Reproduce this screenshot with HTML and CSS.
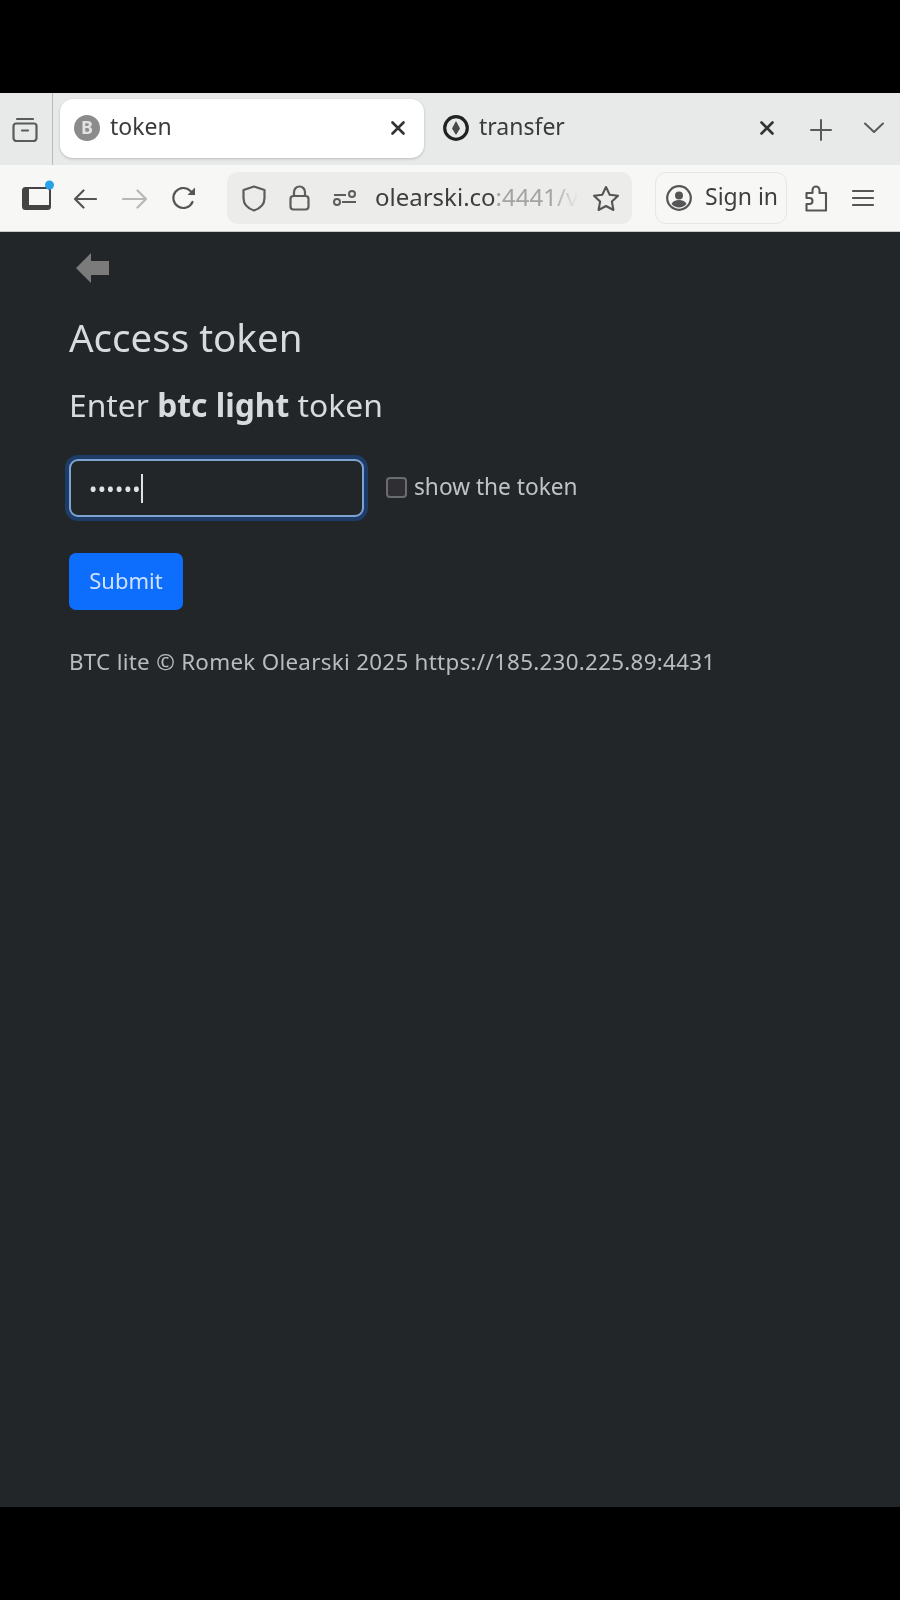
FILE: index.html
```html
<!DOCTYPE html>
<html lang="en">
<head>
<meta charset="utf-8">
<title>token</title>
<link rel="stylesheet" href="styles.css">
</head>
<body>
<div class="letterbox-top"></div>
<header class="chrome">
  <div class="tabbar">
    <span class="tool-archive">
      <svg class="ico" width="26" height="27" viewBox="0 0 26 27"><path d="M5 3h16M1.500 10a2.500 2.500 0 0 1 2.500-2.500h18a2.500 2.500 0 0 1 2.500 2.500v12a3 3 0 0 1-3 3h-17a3 3 0 0 1-3-3zM10 14.500h6" fill="none" stroke="#5b5b5b" stroke-width="2.200" stroke-linecap="round"/></svg>
    </span>
    <span class="tab-sep"></span>
    <div class="tab tab-active">
      <svg class="fav" width="26" height="26" viewBox="0 0 26 26"><circle cx="13" cy="13" r="13" fill="#8b8b8b"/><text x="13" y="19" text-anchor="middle" class="fav-b">B</text></svg>
      <span class="tab-title">token</span>
      <svg class="close" width="14" height="14" viewBox="0 0 14 14"><path d="M1.500 1.500l11 11M12.500 1.500l-11 11" stroke="#333" stroke-width="2.600" stroke-linecap="round"/></svg>
    </div>
    <div class="tab tab-idle">
      <svg class="fav" width="26" height="26" viewBox="0 0 26 26"><circle cx="13" cy="13" r="11.300" fill="none" stroke="#222" stroke-width="3.200"/><path d="M13 6l4 7.500L13 20l-4-6.500z" fill="#4a4a4a"/></svg>
      <span class="tab-title">transfer</span>
      <svg class="close" width="14" height="14" viewBox="0 0 14 14"><path d="M1.500 1.500l11 11M12.500 1.500l-11 11" stroke="#333" stroke-width="2.600" stroke-linecap="round"/></svg>
    </div>
    <svg class="tab-plus" width="22" height="22" viewBox="0 0 22 22"><path d="M11 1v20M1 11h20" stroke="#5a5a5a" stroke-width="2" stroke-linecap="round"/></svg>
    <svg class="tab-chev" width="20" height="12" viewBox="0 0 20 12"><path d="M1 1.500l9 8.500 9-8.500" fill="none" stroke="#5a5a5a" stroke-width="2" stroke-linecap="round" stroke-linejoin="round"/></svg>
  </div>
  <nav class="navbar">
    <span class="sidebar-btn">
      <svg width="34" height="30" viewBox="0 0 34 30"><rect x="1" y="8" width="27" height="21" rx="2.500" fill="none" stroke="#444" stroke-width="2"/><rect x="1" y="9" width="6" height="19" fill="#444"/><rect x="6" y="25" width="21" height="3.500" fill="#444"/><circle cx="27.500" cy="5" r="4.500" fill="#2aa2e8"/></svg>
    </span>
    <svg class="nav-back" width="24" height="20" viewBox="0 0 24 20"><path d="M23 10H2M10.500 1.500L2 10l8.500 8.500" fill="none" stroke="#555" stroke-width="2.200" stroke-linecap="round" stroke-linejoin="round"/></svg>
    <svg class="nav-fwd" width="26" height="20" viewBox="0 0 26 20"><path d="M1 10h23M15.500 1.500L24 10l-8.500 8.500" fill="none" stroke="#b6b7b6" stroke-width="2.200" stroke-linecap="round" stroke-linejoin="round"/></svg>
    <svg class="nav-reload" width="25" height="25" viewBox="0 0 25 25"><path d="M21.500 16a10 10 0 1 1-2-11L23 8" fill="none" stroke="#555" stroke-width="2.200" stroke-linecap="round"/><path d="M24 1.500V9h-7.500z" fill="#555"/></svg>
    <div class="urlbar">
      <svg class="url-shield" width="24" height="27" viewBox="0 0 24 27"><path d="M12 1.500l10.500 3.500v8c0 6-4.500 10.500-10.500 12.500C6 23.500 1.500 19 1.500 13V5z" fill="none" stroke="#5c5c5c" stroke-width="2.200" stroke-linejoin="round"/></svg>
      <svg class="url-lock" width="21" height="26" viewBox="0 0 21 26"><rect x="1.500" y="11" width="18" height="13.500" rx="3" fill="none" stroke="#5c5c5c" stroke-width="2.200"/><path d="M5 11V7a5.500 5.500 0 0 1 11 0v4" fill="none" stroke="#5c5c5c" stroke-width="2.200"/></svg>
      <svg class="url-perm" width="24" height="16" viewBox="0 0 24 16"><path d="M1 5h12M9 12h14" stroke="#5c5c5c" stroke-width="2"/><circle cx="19" cy="4" r="3" fill="none" stroke="#5c5c5c" stroke-width="2"/><circle cx="4" cy="12" r="3" fill="none" stroke="#5c5c5c" stroke-width="2"/></svg>
      <span class="url-text"><span class="url-host">olearski.co</span><span class="url-rest">:4441/v</span></span>
      <svg class="url-star" width="28" height="27" viewBox="0 0 28 27"><path d="M14 2l3.700 7.700 8.300 1.100-6.100 5.800 1.500 8.400L14 21l-7.400 4 1.500-8.400L2 10.800l8.300-1.100z" fill="none" stroke="#555" stroke-width="2.100" stroke-linejoin="round"/></svg>
    </div>
    <div class="signin">
      <svg width="26" height="26" viewBox="0 0 26 26"><circle cx="13" cy="13" r="11.800" fill="none" stroke="#555" stroke-width="2.200"/><circle cx="13" cy="10.500" r="4" fill="#555"/><path d="M5.500 19c1.500-3 4-4 7.500-4s6 1 7.500 4c-2 2-4.500 3.500-7.500 3.500S7.500 21 5.500 19z" fill="#555"/></svg>
      <span>Sign in</span>
    </div>
    <svg class="nav-ext" width="23" height="27" viewBox="0 0 23 27"><path d="M1.500 25.500V19h3a3 3 0 0 0 0-6h-3V8h6V5a3.500 3.500 0 0 1 7 0v3h6.500v17.500z" fill="none" stroke="#555" stroke-width="2.100" stroke-linejoin="round"/></svg>
    <svg class="nav-menu" width="22" height="18" viewBox="0 0 22 18"><path d="M1 2h20M1 9h20M1 16h20" stroke="#555" stroke-width="2.200" stroke-linecap="round"/></svg>
  </nav>
</header>
<main class="page">
  <a class="back" href="#"><svg width="34" height="30" viewBox="0 0 34 30"><path d="M15 0L0 15l15 15v-8h18V8H15z" fill="#7b7b7b"/></svg></a>
  <h1 class="title">Access token</h1>
  <h2 class="prompt">Enter <b>btc light</b> token</h2>
  <form class="token-form">
    <div class="token-row">
      <div class="token-input"><span class="dots">••••••</span><span class="caret"></span></div>
      <label class="show"><span class="check"></span><span>show the token</span></label>
    </div>
    <button type="button" class="submit">Submit</button>
  </form>
  <p class="foot">BTC lite © Romek Olearski 2025 https://185.230.225.89:4431</p>
</main>
<div class="letterbox-bottom"></div>
</body>
</html>
```

FILE: styles.css
```css
* { box-sizing: border-box; }
html, body { margin: 0; height: 100%; }
body {
  width: 900px;
  height: 1600px;
  overflow: hidden;
  background: #000;
  display: flex;
  flex-direction: column;
  font-family: "Noto Sans", "Open Sans", sans-serif;
}
svg { display: block; flex: none; }
.letterbox-top { height: 93px; background: #000; flex: none; }
.letterbox-bottom { height: 93px; background: #000; flex: none; }

.chrome { flex: none; filter: blur(.4px); }
.tabbar {
  height: 72px;
  background: #e8e9e9;
  display: flex;
  align-items: center;
  position: relative;
}
.tool-archive { width: 52px; padding-left: 12px; }
.tab-sep { width: 1px; height: 72px; background: #b9baba; }
.tab {
  height: 59px;
  display: flex;
  align-items: center;
  padding-left: 14px;
  margin-bottom: 2px;
  border-radius: 13px;
}
.tab-active {
  width: 364px;
  margin-left: 7px;
  background: #fff;
  box-shadow: 0 1px 3px rgba(0,0,0,.2);
}
.tab-idle { width: 364px; padding-left: 19px; }
.tab-title {
  font-size: 23px;
  color: #3b3b3b;
  margin-left: 10px;
  flex: 1;
  padding-bottom: 5px;
}
.fav-b { font-size: 18px; font-weight: 700; fill: #e2e2e2; font-family: "Noto Sans", sans-serif; }
.close { margin-right: 19px; }
.tab-idle .close { margin-right: 14px; }
.tab-plus { margin-left: 22px; margin-top: 2px; }
.tab-chev { margin-left: 32px; margin-top: -2px; }

.navbar {
  height: 67px;
  background: #f7f8f6;
  border-bottom: 1px solid #c9cac9;
  display: flex;
  align-items: center;
}
.sidebar-btn { margin-left: 22px; margin-top: -6px; }
.nav-back { margin-left: 17px; margin-top: 1px; }
.nav-fwd { margin-left: 25px; margin-top: 1px; }
.nav-reload { margin-left: 23px; }
.urlbar {
  margin-left: 31px;
  width: 405px;
  height: 52px;
  background: #ecedeb;
  border-radius: 11px;
  display: flex;
  align-items: center;
}
.url-shield { margin-left: 15px; }
.url-lock { margin-left: 23px; }
.url-perm { margin-left: 23px; }
.url-text {
  margin-left: 18px;
  width: 206px;
  white-space: nowrap;
  font-size: 24px;
  padding-bottom: 3px;
  -webkit-mask-image: linear-gradient(to right, #000 175px, transparent 204px);
  mask-image: linear-gradient(to right, #000 175px, transparent 204px);
}
.url-host { color: #3e3e3e; }
.url-rest { color: #a2a3a2; }
.url-star { margin-left: 11px; }
.signin {
  margin-left: 23px;
  width: 132px;
  height: 52px;
  border: 1.500px solid #e6e7e5;
  border-radius: 11px;
  display: flex;
  align-items: center;
  padding-left: 10px;
  gap: 13px;
  font-size: 23px;
  color: #3e3e3e;
}
.signin span { padding-bottom: 4px; }
.nav-ext { margin-left: 18px; }
.nav-menu { margin-left: 24px; }

.page {
  flex: 1;
  background: #222629;
  padding: 21px 0 0 69px;
  color: #d8dbde;
  filter: blur(.4px);
}
.back { display: block; width: 34px; margin-left: 7px; }
.title {
  margin: 31px 0 0;
  font-size: 38.500px;
  font-weight: 400;
  line-height: 46px;
}
.prompt {
  margin: 25px 0 0;
  font-size: 31.800px;
  font-weight: 400;
  line-height: 40px;
}
.prompt b { font-weight: 700; }
.token-form { margin-top: 34px; }
.token-row { display: flex; align-items: center; }
.token-input {
  width: 295px;
  height: 58px;
  border: 2px solid #7ea2d2;
  border-radius: 9px;
  box-shadow: 0 0 0 4px #1d3c68;
  background: #222629;
  padding-left: 18px;
  display: flex;
  align-items: center;
  color: #dee2e6;
}
.dots { font-size: 22px; letter-spacing: .4px; }
.caret { width: 2px; height: 29px; background: #dee2e6; }
.show {
  display: flex;
  align-items: center;
  margin-left: 22px;
  margin-bottom: 4px;
  font-size: 22.700px;
  color: #c0c3c5;
}
.check {
  width: 21px;
  height: 21px;
  border: 2px solid #6a6c6e;
  border-radius: 4px;
  background: #2f2e32;
  margin-right: 7px;
  margin-top: 2px;
}
.submit {
  display: block;
  margin-top: 36px;
  width: 114px;
  height: 57px;
  padding: 0 0 4px;
  background: #0d6efd;
  border: 0;
  border-radius: 7px;
  color: #cfe1ff;
  font: inherit;
  font-size: 22px;
}
.foot {
  margin: 37px 0 0;
  font-size: 22.400px;
  letter-spacing: .28px;
  line-height: 30px;
  color: #b9bcbe;
}
```
